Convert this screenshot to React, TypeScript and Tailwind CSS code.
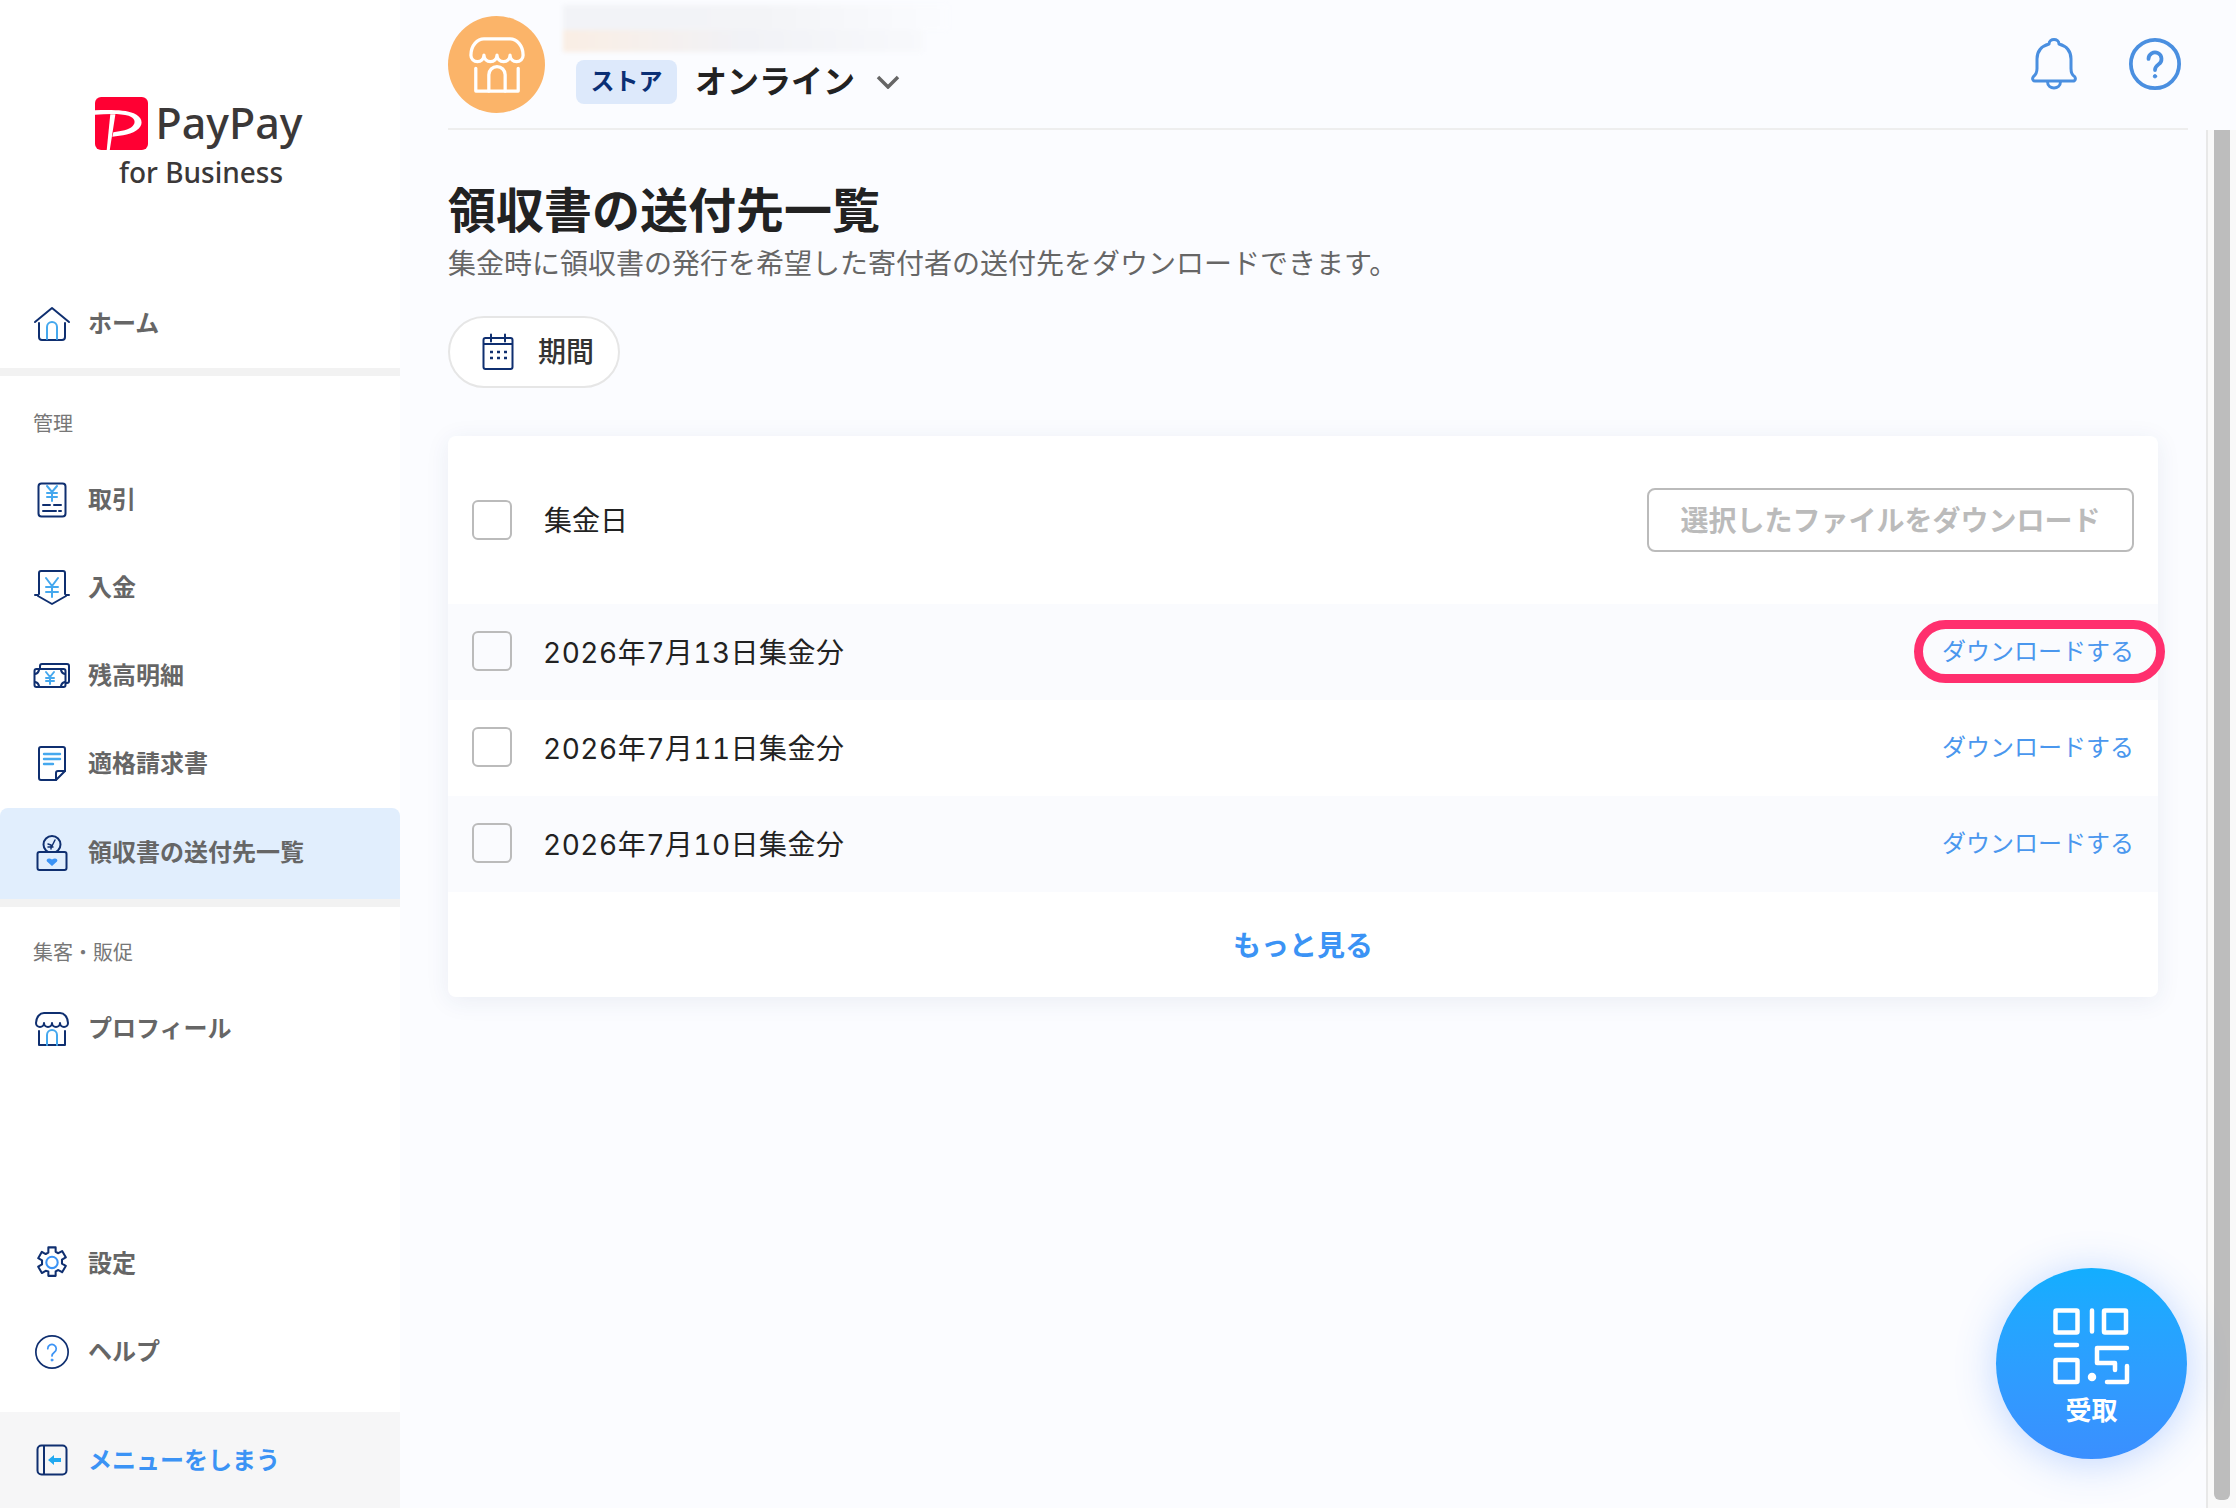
import React from 'react';

const JP = "font-['Inter','Noto_Sans_CJK_JP',sans-serif]";

const navy = '#0f2f70';
const sky = '#45a8ee';

const HomeIcon = () => (
  <svg className="shrink-0" width="38" height="36" viewBox="0 0 38 36" fill="none" strokeLinecap="round" strokeLinejoin="round" strokeWidth="2">
    <path d="M2 16 19 2l17 14" stroke={navy} />
    <path d="M6 17v14a3 3 0 0 0 3 3h20a3 3 0 0 0 3-3V17" stroke={navy} />
    <path d="M14 33V21a5 5 0 0 1 10 0v12" stroke={sky} />
  </svg>
);

const ReceiptIcon = () => (
  <svg className="shrink-0" width="30" height="36" viewBox="0 0 30 36" fill="none" strokeWidth="2" strokeLinecap="round">
    <rect x="1.5" y="1.5" width="27" height="33" rx="3" stroke={navy} />
    <path d="M10 4l5 6 5-6M15 10v9M10 11h10M10 15h10" stroke={sky} />
    <path d="M6 23h7M17 23h7M6 29h13M22 29h2" stroke={navy} />
  </svg>
);

const DepositIcon = () => (
  <svg className="shrink-0" width="38" height="36" viewBox="0 0 38 36" fill="none" strokeWidth="2" strokeLinecap="round" strokeLinejoin="round">
    <path d="M6 24V3a2 2 0 0 1 2-2h22a2 2 0 0 1 2 2v21" stroke={navy} />
    <path d="M2 25h3v1l14 8 14-8v-1h3" stroke={navy} />
    <path d="M13 8l6 8 6-8M19 16v11M13 17h12M13 22h12" stroke={sky} />
  </svg>
);

const BalanceIcon = () => (
  <svg className="shrink-0" width="38" height="26" viewBox="0 0 38 26" fill="none" strokeWidth="2" strokeLinecap="round" strokeLinejoin="round">
    <path d="M7 5V3a2 2 0 0 1 2-2h25a2 2 0 0 1 2 2v15a2 2 0 0 1-2 2h-1" stroke={navy} />
    <rect x="1.5" y="6" width="31" height="18" rx="2" stroke={navy} />
    <path d="M2 11a5 5 0 0 0 4-4M28 7a5 5 0 0 0 4 4M2 19a5 5 0 0 1 4 4M28 23a5 5 0 0 1 4-4" stroke={navy} />
    <path d="M13 9l4 5 4-5M17 14v7M13 15h8M13 18h8" stroke={sky} />
  </svg>
);

const InvoiceIcon = () => (
  <svg className="shrink-0" width="30" height="36" viewBox="0 0 30 36" fill="none" strokeWidth="2" strokeLinecap="round" strokeLinejoin="round">
    <path d="M19 34H4a2 2 0 0 1-2-2V3a2 2 0 0 1 2-2h22a2 2 0 0 1 2 2v22z" stroke={navy} />
    <path d="M19 34v-7a2 2 0 0 1 2-2h7" stroke={navy} />
    <path d="M7 8h16M7 13h16M7 18h9" stroke={sky} strokeWidth="2.4" />
  </svg>
);

const DonationIcon = () => (
  <svg className="shrink-0" width="32" height="36" viewBox="0 0 32 36" fill="none" strokeWidth="2" strokeLinecap="round" strokeLinejoin="round">
    <circle cx="16" cy="9.500" r="8.500" stroke={navy} />
    <path d="M19 5l-4 8M12 9l3 1v4M12 12h5" stroke={navy} strokeWidth="1.500" />
    <rect x="1.5" y="17" width="29" height="18" rx="2" fill="#e1eefd" stroke={navy} />
    <path d="M16 31l-5-4.500c-1.500-2 1.500-4.500 5-2 3.500-2.500 6.500 0 5 2z" fill="#3b93f5" stroke="none" />
  </svg>
);

const StoreIcon = ({ color = navy, accent = sky, size = 38 }: { color?: string; accent?: string; size?: number }) => (
  <svg className="shrink-0" width={size} height={size} viewBox="0 0 38 36" fill="none" strokeWidth="2" strokeLinecap="round" strokeLinejoin="round">
    <path d="M3 12C3 6 7 2 11 2H27C31 2 35 6 35 12A4 4 0 0 1 27 12A4 4 0 0 1 19 12A4 4 0 0 1 11 12A4 4 0 0 1 3 12Z" stroke={color} />
    <path d="M6 20V34H32V20" stroke={color} />
    <path d="M14 34V24a5 5 0 0 1 10 0V34" stroke={accent} />
  </svg>
);

const GearIcon = () => (
  <svg className="shrink-0" width="38" height="38" viewBox="0 0 24 24" fill="none" stroke={navy} strokeWidth="1.3" strokeLinejoin="round">
    <path d="M9.700 1.500h4.600v2.800l1.700.9 2.400-1.400 2.300 4-2.400 1.400v2.600l2.400 1.400-2.300 4-2.400-1.400-1.700.9v2.800H9.700v-2.800L8 16.300l-2.400 1.400-2.300-4 2.400-1.400V9.700L3.300 8.300l2.300-4L8 5.700l1.700-.9z" />
    <circle cx="12" cy="11" r="3.600" stroke="#3b93f5" />
  </svg>
);

const HelpIcon = ({ size, color, accent, sw }: { size: number; color: string; accent: string; sw: number }) => (
  <svg className="shrink-0" width={size} height={size} viewBox="0 0 36 36" fill="none" strokeWidth={sw} strokeLinecap="round">
    <circle cx="18" cy="18" r={18 - sw / 2} stroke={color} />
    <path d="M13.500 14.500a4.500 4.500 0 1 1 7 3.700c-1.800 1.300-2.500 2.300-2.500 4" stroke={accent} />
    <circle cx="18" cy="26.500" r="1.200" fill={accent} stroke={accent} strokeWidth="0.6" />
  </svg>
);

const CollapseIcon = () => (
  <svg className="shrink-0" width="32" height="32" viewBox="0 0 32 32" fill="none" strokeWidth="2" strokeLinecap="round" strokeLinejoin="round">
    <rect x="1.500" y="1.500" width="29" height="29" rx="4" stroke={navy} />
    <path d="M8 2v28" stroke={navy} />
    <path d="M12 16l6-5v3h7v4h-7v3z" fill="#1fa8f0" />
  </svg>
);

const PayPayMark = () => (
  <svg className="shrink-0" width="53" height="53" viewBox="0 0 52 52">
    <rect width="52" height="52" rx="6" fill="#ff0033" />
    <path d="M0 13C15 12.500 30 12.500 38 16C46 19.500 48 26 43 31C37 37 26 38 17 39L18 34.500C26 33.500 33 32.500 37 28.500C40.500 25 39 20.500 33 18.500C25 16 12 16.500 0 17.500Z" fill="#fff" />
    <path d="M15 17L20 17L14.500 52H11.500Z" fill="#fff" />
  </svg>
);

const CalendarIcon = () => (
  <svg className="shrink-0" width="32" height="38" viewBox="0 0 32 38" fill="none" strokeWidth="2" strokeLinecap="round">
    <rect x="1.500" y="5" width="29" height="31" rx="2" stroke={navy} />
    <path d="M9 1.500v7M23 1.500v7M2 11h28" stroke={navy} />
    <path d="M8 19h3M15 19h3M22 19h3M8 25h3M15 25h3M22 25h3" stroke={navy} strokeWidth="2.400" strokeLinecap="butt" />
  </svg>
);

const BellIcon = () => (
  <svg className="shrink-0" width="46" height="52" viewBox="0 0 46 52" fill="none" stroke="#4a8fe0" strokeWidth="3" strokeLinejoin="round">
    <path d="M4 43c-2.500 0-3-3-1.500-4.500 2.500-2 3.500-4 3.500-8V21C6 13 11 8 18 6c0-6 10-6 10 0 7 2 12 7 12 15v9.500c0 4.500 1 6.500 3.500 8C45 40 44.500 43 42 43z" />
    <path d="M16.500 43.500c0 8.500 13 8.500 13 0" />
  </svg>
);

const QrIcon = () => (
  <svg className="shrink-0" width="78" height="78" viewBox="0 0 78 78" fill="none" stroke="#fff" strokeWidth="4.500" strokeLinecap="round" strokeLinejoin="round">
    <rect x="2.500" y="2.500" width="22" height="22" rx="1" />
    <rect x="51" y="2.500" width="22" height="22" rx="1" />
    <path d="M39 2.500v21M3 37h21" />
    <rect x="2.500" y="52" width="22" height="22" rx="1" />
    <circle cx="39" cy="69" r="2" fill="#fff" />
    <path d="M74 40H44V55H62V62M74 58V74H54" />
  </svg>
);

const NavItem = ({ icon, label, active }: { icon: React.ReactNode; label: string; active?: boolean }) => (
  <div className={`flex shrink-0 items-center ${active ? 'h-[91px] rounded-t-lg bg-[#e1eefd] pb-[2px]' : 'h-[88px]'}`}>
    <div className="ml-[33px] mr-[17px] flex w-[38px] shrink-0 justify-center">{icon}</div>
    <span className="text-[24px] font-bold text-[#666666]">{label}</span>
  </div>
);

const rows = ['2026年7月13日集金分', '2026年7月11日集金分', '2026年7月10日集金分'];

const App: React.FC = () => {
  return (
    <div className={`${JP} relative flex h-[1508px] w-[2236px] overflow-hidden bg-[#fbfcff]`}>
      <aside className="flex w-[400px] shrink-0 flex-col bg-white">
        <div className="flex h-[280px] shrink-0 flex-col items-center pt-[97px] pr-[2px]">
          <div className="flex items-center gap-[7px]">
            <PayPayMark />
            <span className="pb-[3px] font-['Noto_Sans',sans-serif] text-[43px] font-medium leading-none text-[#3b3838]">PayPay</span>
          </div>
          <span className="mt-[5px] pl-[4px] font-['Noto_Sans',sans-serif] text-[28px] font-medium leading-[34px] text-[#3b3838]">for Business</span>
        </div>
        <NavItem icon={<HomeIcon />} label="ホーム" />
        <div className="h-2 shrink-0 bg-[#f2f2f2]" />
        <div className="flex h-[80px] shrink-0 items-center pl-[33px] pt-[15px] text-[20px] text-[#777777]">管理</div>
        <NavItem icon={<ReceiptIcon />} label="取引" />
        <NavItem icon={<DepositIcon />} label="入金" />
        <NavItem icon={<BalanceIcon />} label="残高明細" />
        <NavItem icon={<InvoiceIcon />} label="適格請求書" />
        <NavItem icon={<DonationIcon />} label="領収書の送付先一覧" active />
        <div className="h-2 shrink-0 bg-[#f2f2f2]" />
        <div className="flex h-[78px] shrink-0 items-center pl-[33px] pt-[13px] text-[20px] text-[#777777]">集客・販促</div>
        <NavItem icon={<StoreIcon />} label="プロフィール" />
        <div className="mt-auto">
          <NavItem icon={<GearIcon />} label="設定" />
          <NavItem icon={<HelpIcon size={34} color={navy} accent="#3b93f5" sw={1.8} />} label="ヘルプ" />
          <div className="mt-[16px] flex h-[96px] items-center bg-[#f6f6f7]">
            <div className="ml-[33px] mr-[17px] flex w-[38px] shrink-0 justify-center">
              <CollapseIcon />
            </div>
            <span className="pt-[2px] text-[24px] font-bold text-[#3b93f5]">メニューをしまう</span>
          </div>
        </div>
      </aside>

      <main className="flex min-w-0 flex-1 flex-col pl-[48px] pr-[18px]">
        <header className="flex h-[130px] shrink-0 items-start border-b-2 border-[#eeeeee]">
          <div className="mt-[16px] flex h-[97px] w-[97px] shrink-0 items-center justify-center rounded-full bg-[#fbb469]">
            <StoreIcon color="#ffffff" accent="#ffffff" size={62} />
          </div>
          <div className="ml-[18px] flex flex-col">
            <div className="mt-[5px] blur-[2px]">
              <div className="h-[25px] w-[386px] bg-gradient-to-r from-[#f2f3f7] via-[#f3f4f7] to-[#fbfcff]" />
              <div className="h-[22px] w-[360px] bg-gradient-to-r from-[#faeee4] via-[#f1f2f6] to-[#f8f9fc]" />
            </div>
            <div className="mt-[8px] ml-[13px] flex items-center">
              <span className="flex h-[44px] w-[101px] items-center justify-center rounded-lg bg-[#dde9fb] text-[24px] font-bold text-[#0a2f75]">ストア</span>
              <span className="ml-[18px] text-[32px] font-bold leading-none text-[#222222]">オンライン</span>
              <svg className="ml-[21px]" width="24" height="14" viewBox="0 0 24 14" fill="none" stroke="#666666" strokeWidth="3.500">
                <path d="M2 2l10 10L22 2" />
              </svg>
            </div>
          </div>
          <div className="ml-auto mt-[38px] flex items-start gap-[52px] pr-[7px]">
            <BellIcon />
            <HelpIcon size={52} color="#4a8fe0" accent="#4a8fe0" sw={2.6} />
          </div>
        </header>

        <h1 className="mt-[51px] text-[48px] font-bold leading-[60px] text-[#222222]">領収書の送付先一覧</h1>
        <p className="mt-[3px] text-[28px] leading-[40px] text-[#666666]">集金時に領収書の発行を希望した寄付者の送付先をダウンロードできます。</p>

        <button className="mt-[32px] flex h-[72px] w-[172px] items-center rounded-full border-2 border-[#e6e6e6] bg-white pl-[32px]">
          <CalendarIcon />
          <span className="ml-[24px] text-[28px] font-medium text-[#333333]">期間</span>
        </button>

        <section className="mt-[48px] mr-[30px] h-[561px] rounded-lg bg-white shadow-[0_4px_24px_rgba(40,60,110,0.08)]">
          <div className="flex h-[168px] items-center justify-between pr-[24px] pl-[24px]">
            <div className="flex items-center">
              <span className="h-10 w-10 rounded-md border-2 border-[#bbbbbb] bg-white" />
              <span className="ml-[32px] pt-[1px] text-[28px] text-[#222222]">集金日</span>
            </div>
            <button className="flex h-16 w-[487px] items-center justify-center rounded-lg border-2 border-[#bbbbbb] pt-[1px] text-[28px] font-bold text-[#bbbbbb]">
              選択したファイルをダウンロード
            </button>
          </div>
          {rows.map((row, index) => (
            <div key={index} className={`flex h-[96px] items-center justify-between px-[24px] ${index % 2 === 0 ? 'bg-[#fafbfe]' : ''}`}>
              <div className="flex items-center">
                <span className="mb-[2px] h-10 w-10 rounded-md border-2 border-[#bbbbbb] bg-transparent" />
                <span className="ml-[31px] pt-[1px] text-[28px] tabular-nums tracking-[0.5px] text-[#222222]">{row}</span>
              </div>
              <div className="relative">
                <span className="text-[24px] text-[#4a97ee]">ダウンロードする</span>
                {index === 0 && (
                  <span className="absolute -top-[14px] -right-[31px] -bottom-[13px] -left-[28px] rounded-[32px] border-[9px] border-[#ff2f6e]" />
                )}
              </div>
            </div>
          ))}
          <div className="flex h-[105px] items-center justify-center pt-[3px] text-[28px] font-bold text-[#3b93f5]">もっと見る</div>
        </section>
      </main>

      <div className="mt-[130px] flex w-[30px] shrink-0 border-l-2 border-[#e8e8e8] bg-[#f9f9f9] pl-[6px] pr-[6px]">
        <div className="mb-[8px] w-[16px] rounded-b-md bg-[#bdbdbd]" />
      </div>

      <div className="absolute top-[1268px] left-[1996px] flex h-[191px] w-[191px] flex-col items-center rounded-full bg-gradient-to-b from-[#12aeff] to-[#3a8fff] pt-[40px] shadow-[0_4px_40px_rgba(60,130,255,0.3)]">
        <QrIcon />
        <span className="mt-[10px] text-[26px] font-bold leading-[30px] text-white">受取</span>
      </div>
    </div>
  );
};

export default App;
